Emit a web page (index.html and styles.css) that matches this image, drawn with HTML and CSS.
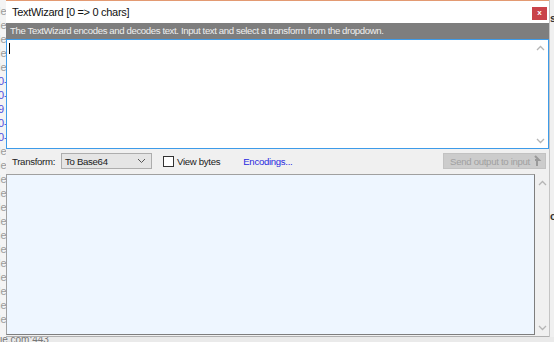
FILE: index.html
```html
<!DOCTYPE html>
<html lang="en">
<head>
    <meta charset="UTF-8">
    <title>TextWizard</title>
    <link rel="stylesheet" href="styles.css">
</head>
<body>

<div class="desktop">
    <div class="behind-left">
        <div class="frag">le</div>
        <div class="frag">le</div>
        <div class="frag">le</div>
        <div class="frag">le</div>
        <div class="frag">le</div>
        <div class="frag link">0-</div>
        <div class="frag link">0-</div>
        <div class="frag link">9</div>
        <div class="frag link">0-</div>
        <div class="frag link">0-</div>
        <div class="frag">le</div>
        <div class="frag">le</div>
        <div class="frag">le</div>
        <div class="frag">le</div>
        <div class="frag">le</div>
        <div class="frag">le</div>
        <div class="frag">le</div>
        <div class="frag">le</div>
        <div class="frag">le</div>
        <div class="frag">le</div>
        <div class="frag">le</div>
        <div class="frag">le</div>
        <div class="frag">le</div>
    </div>

    <div class="window">
        <div class="titlebar">
            <span class="title">TextWizard [0 =&gt; 0 chars]</span>
            <span class="close">x</span>
        </div>
        <div class="info">The TextWizard encodes and decodes text. Input text and select a transform from the dropdown.</div>

        <div class="input-box">
            <div class="input-text"><span class="caret"></span></div>
            <div class="vscroll">
                <svg width="9" height="6" viewBox="0 0 9 6"><path d="M1 5 L4.5 1.5 L8 5" fill="none" stroke="#b5b5b5" stroke-width="1.3"/></svg>
                <svg width="9" height="6" viewBox="0 0 9 6"><path d="M1 1 L4.5 4.5 L8 1" fill="none" stroke="#b5b5b5" stroke-width="1.3"/></svg>
            </div>
        </div>

        <div class="toolbar">
            <span class="label">Transform:</span>
            <div class="select">
                <span>To Base64</span>
                <svg width="9" height="6" viewBox="0 0 9 6"><path d="M1 1 L4.5 4.5 L8 1" fill="none" stroke="#555" stroke-width="1"/></svg>
            </div>
            <label class="check"><span class="box"></span>View bytes</label>
            <a class="link-btn">Encodings...</a>
            <div class="send-btn">Send output to input
                <svg width="9" height="12" viewBox="0 0 9 12"><path d="M2 1 L6 5 L2 5 M6 5 L4 5 L4 11" fill="none" stroke="#9a9a9a" stroke-width="2"/></svg>
            </div>
        </div>

        <div class="output-row">
            <div class="output-box"></div>
            <div class="vscroll gray">
                <svg width="9" height="6" viewBox="0 0 9 6"><path d="M1 5 L4.5 1.5 L8 5" fill="none" stroke="#b5b5b5" stroke-width="1.3"/></svg>
                <svg width="9" height="6" viewBox="0 0 9 6"><path d="M1 1 L4.5 4.5 L8 1" fill="none" stroke="#b5b5b5" stroke-width="1.3"/></svg>
            </div>
        </div>
    </div>

    <div class="behind-right">
        <div class="frag top">st</div>
        <div class="frag mid">c</div>
    </div>
</div>

<div class="bottom-strip">
    <span class="frag-bottom">le.com:443</span>
</div>

</body>
</html>
```

FILE: styles.css
```css
* {
    margin: 0;
    padding: 0;
    box-sizing: border-box;
}

body {
    width: 554px;
    height: 342px;
    overflow: hidden;
    background: #ececec;
    font-family: "Liberation Sans", Arial, sans-serif;
    font-size: 11px;
    color: #1a1a1a;
}

.desktop {
    display: flex;
    height: 337px;
}

.behind-left {
    width: 6px;
    background: #f4f4f4;
    overflow: hidden;
    padding-top: 4px;
}

.behind-left .frag {
    height: 14px;
    font-size: 11px;
    line-height: 14px;
    color: #9a9a9a;
    white-space: nowrap;
    margin-left: -2px;
}

.behind-left .frag.link {
    color: #5050e0;
}

.behind-right {
    width: 5px;
    background: #f0f0f0;
    border-left: 1px solid #c4c4c4;
    overflow: hidden;
}

.behind-right .frag {
    font-size: 11px;
    font-weight: bold;
    color: #333;
    padding-top: 12px;
}

.behind-right .mid {
    padding-top: 186px;
}

.window {
    width: 543px;
    display: flex;
    flex-direction: column;
    background: #f0f0f0;
    border-top: 1px solid #e39a72;
    border-bottom: 1px solid #b0b0b0;
}

.titlebar {
    height: 22px;
    background: #fff;
    display: flex;
    align-items: center;
    justify-content: space-between;
    padding-left: 6px;
    padding-right: 2px;
}

.title {
    font-size: 11px;
    letter-spacing: -0.3px;
    color: #111;
}

.close {
    width: 15px;
    height: 13px;
    background: #c9434a;
    color: #fff;
    font-size: 8px;
    font-weight: bold;
    line-height: 12px;
    text-align: center;
    margin-top: 3px;
}

.info {
    height: 16px;
    background: #7e7e7e;
    color: #eeeeee;
    font-size: 9.6px;
    letter-spacing: -0.38px;
    line-height: 16px;
    padding-left: 4px;
    white-space: nowrap;
}

.input-box {
    height: 110px;
    background: #fff;
    border: 1px solid #3d9be9;
    display: flex;
}

.input-text {
    flex: 1;
    padding: 3px 2px;
}

.caret {
    display: block;
    width: 1px;
    height: 11px;
    background: #000;
}

.vscroll {
    width: 15px;
    display: flex;
    flex-direction: column;
    justify-content: space-between;
    align-items: center;
    padding: 5px 0 4px;
}

.vscroll.gray {
    width: 14px;
    background: #f0f0f0;
    padding: 6px 0 4px;
}

.toolbar {
    height: 24px;
    display: flex;
    align-items: center;
    padding-left: 6px;
    padding-right: 3px;
    font-size: 9.6px;
    letter-spacing: -0.3px;
}

.label {
    color: #222;
}

.select {
    margin-left: 6px;
    width: 91px;
    height: 16px;
    border: 1px solid #adadad;
    background: #e5e5e5;
    display: flex;
    align-items: center;
    justify-content: space-between;
    padding: 0 5px 0 3px;
}

.check {
    margin-left: 11px;
    display: flex;
    align-items: center;
    gap: 3px;
}

.box {
    width: 11px;
    height: 11px;
    border: 1px solid #333;
    background: #fff;
}

.link-btn {
    margin-left: 23px;
    color: #2929e0;
}

.send-btn {
    margin-left: auto;
    width: 103px;
    height: 16px;
    background: #cccccc;
    border: 1px solid #c2c2c2;
    color: #a0a0a0;
    display: flex;
    align-items: center;
    justify-content: flex-end;
    gap: 3px;
    padding-right: 3px;
    white-space: nowrap;
}

.output-row {
    flex: 1;
    display: flex;
    padding-top: 1px;
    padding-bottom: 1px;
}

.output-box {
    flex: 1;
    background: #eef6ff;
    border: 1px solid #a0a0a0;
    border-right-color: #7e7e7e;
    border-bottom-color: #7e7e7e;
}

.bottom-strip {
    height: 5px;
    background: #eaeaea;
    overflow: hidden;
}

.frag-bottom {
    display: block;
    font-size: 10px;
    line-height: 10px;
    color: #777;
    margin-top: -2px;
}
```
